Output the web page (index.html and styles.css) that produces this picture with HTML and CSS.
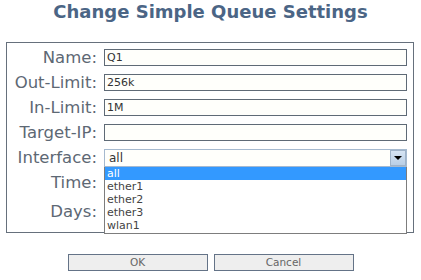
FILE: index.html
```html
<!DOCTYPE html>
<html>
<head>
<meta charset="utf-8">
<link rel="stylesheet" href="styles.css">
</head>
<body>
<h1 class="title">Change Simple Queue Settings</h1>
<div class="panel">
  <div class="row"><div class="label">Name:</div><div class="input">Q1</div></div>
  <div class="row"><div class="label">Out-Limit:</div><div class="input">256k</div></div>
  <div class="row"><div class="label">In-Limit:</div><div class="input">1M</div></div>
  <div class="row"><div class="label">Target-IP:</div><div class="input"></div></div>
  <div class="row"><div class="label">Interface:</div>
    <div class="select">
      <span class="value">all</span>
      <span class="arrow"></span>
      <ul class="dropdown">
        <li class="sel">all</li>
        <li>ether1</li>
        <li>ether2</li>
        <li>ether3</li>
        <li>wlan1</li>
      </ul>
    </div>
  </div>
  <div class="row time"><div class="label">Time:</div></div>
  <div class="row days"><div class="label">Days:</div></div>
</div>
<div class="buttons">
  <button class="btn">OK</button>
  <button class="btn">Cancel</button>
</div>
</body>
</html>
```
FILE: styles.css
```css
html, body {
  margin: 0;
  padding: 0;
  background: #ffffff;
}
body {
  width: 421px;
  height: 280px;
  overflow: hidden;
  font-family: "DejaVu Sans", Verdana, sans-serif;
}
.title {
  margin: 0;
  padding-top: 1px;
  height: 22px;
  line-height: 22px;
  font-size: 18px;
  font-weight: bold;
  color: #4b6585;
  text-align: center;
}
.panel {
  box-sizing: border-box;
  width: 408px;
  height: 191px;
  margin: 19px 0 0 6px;
  border: 1px solid #66707c;
  padding: 6px 0 0 0;
}
.row {
  display: flex;
  height: 17px;
  margin-bottom: 8px;
}
.label {
  width: 90px;
  margin-right: 7px;
  text-align: right;
  font-size: 16.5px;
  line-height: 17px;
  color: #5d6874;
}
.input {
  box-sizing: border-box;
  width: 303px;
  height: 17px;
  border: 1px solid #5f6a76;
  background: #fffffb;
  padding-left: 2px;
  font-size: 11px;
  line-height: 16px;
  color: #333;
}
.select {
  position: relative;
  box-sizing: border-box;
  width: 303px;
  height: 18px;
  border: 1px solid #a5b9cf;
  background: #fffffb;
  display: flex;
  align-items: center;
}
.select .value {
  flex: 1;
  padding-left: 4px;
  font-size: 12px;
  color: #333;
}
.select .arrow {
  box-sizing: border-box;
  width: 16px;
  height: 16px;
  border: 1px solid #9fb3c9;
  background: linear-gradient(#d6e4f3, #b9cfe6);
  display: flex;
  align-items: center;
  justify-content: center;
}
.select .arrow::after {
  content: "";
  width: 0;
  height: 0;
  border-left: 4px solid transparent;
  border-right: 4px solid transparent;
  border-top: 4px solid #000;
}
.dropdown {
  position: absolute;
  left: -1px;
  top: 17px;
  box-sizing: border-box;
  width: 303px;
  margin: 0;
  padding: 0 0 1px 0;
  list-style: none;
  border: 1px solid #7d7d7d;
  border-top: none;
  background: #fff;
  z-index: 2;
}
.dropdown li {
  height: 13px;
  line-height: 13px;
  padding-left: 2px;
  font-size: 11px;
  color: #444;
}
.dropdown li.sel {
  background: #3399ff;
  color: #fff;
}
.row.time {
  margin-top: 4px;
  margin-bottom: 12px;
}
.row.days {
  margin-bottom: 0;
}
.buttons {
  display: flex;
  justify-content: center;
  gap: 6px;
  margin-top: 21px;
}
.btn {
  box-sizing: border-box;
  width: 140px;
  height: 17px;
  padding: 0;
  border: 1px solid #647387;
  background: #eeeeee;
  font-family: "DejaVu Sans", Verdana, sans-serif;
  font-size: 10.5px;
  color: #666;
  line-height: 15px;
}
```
